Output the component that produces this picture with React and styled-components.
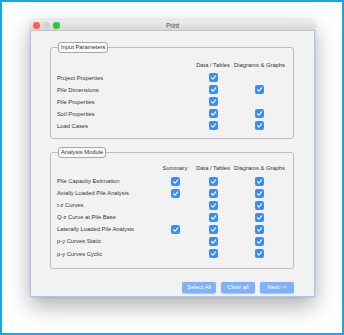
import React from "react";
import styled, { createGlobalStyle } from "styled-components";

const GlobalStyle = createGlobalStyle`
  html, body {
    margin: 0;
    background: #ffffff;
  }
  * {
    box-sizing: border-box;
  }
`;

const inputRows = [
  { label: "Project Properties", checks: [true, false] },
  { label: "Pile Dimensions", checks: [true, true] },
  { label: "Pile Properties", checks: [true, false] },
  { label: "Soil Properties", checks: [true, true] },
  { label: "Load Cases", checks: [true, true] },
];

const analysisRows = [
  { label: "Pile Capacity Estimation", checks: [true, true, true] },
  { label: "Axially Loaded Pile Analysis", checks: [true, true, true] },
  { label: "t-z Curves", checks: [false, true, true] },
  { label: "Q-z Curve at Pile Base", checks: [false, true, true] },
  { label: "Laterally Loaded Pile Analysis", checks: [true, true, true] },
  { label: "p-y Curves Static", checks: [false, true, true] },
  { label: "p-y Curves Cyclic", checks: [false, true, true] },
];

function Check({ on }) {
  if (!on) return <Empty />;
  return (
    <Box>
      <svg width="7" height="7" viewBox="0 0 10 10">
        <path
          d="M2 5.3 L4.2 7.4 L8.2 2.6"
          fill="none"
          stroke="#fff"
          strokeWidth="1.5"
          strokeLinecap="round"
          strokeLinejoin="round"
        />
      </svg>
    </Box>
  );
}

function Group({ title, headers, rows, cols, top, bottom }) {
  return (
    <Fieldset $top={top} $bottom={bottom}>
      <Legend>{title}</Legend>
      <Grid $cols={cols}>
        <span />
        {headers.map((h, i) => (
          <Header key={i}>{h}</Header>
        ))}
        {rows.map((r) => (
          <React.Fragment key={r.label}>
            <Label>{r.label}</Label>
            {r.checks.map((c, i) => (
              <Cell key={i}>
                <Check on={c} />
              </Cell>
            ))}
          </React.Fragment>
        ))}
      </Grid>
    </Fieldset>
  );
}

export default function App() {
  return (
    <>
      <GlobalStyle />
      <Frame>
        <Window>
          <TitleBar>
            <Lights>
              <Light $c="#fc5f57" />
              <Light $c="#d3d3d3" />
              <Light $c="#2cc440" />
            </Lights>
            <Title>Print</Title>
          </TitleBar>
          <Content>
            <Group
              title="Input Parameters"
              headers={["Data / Tables", "Diagrams & Graphs"]}
              rows={inputRows}
              cols="1fr 36px 54px"
              top={5.5}
              bottom={6.5}
            />
            <Group
              title="Analysis Module"
              headers={["Summary", "Data / Tables", "Diagrams & Graphs"]}
              rows={analysisRows}
              cols="1fr 37px 36px 54px"
              top={3.5}
              bottom={8.5}
            />
            <Buttons>
              <Button>Select All</Button>
              <Button>Clear all</Button>
              <Button>Next -&gt;</Button>
            </Buttons>
          </Content>
        </Window>
      </Frame>
    </>
  );
}

const Frame = styled.div`
  width: 344px;
  height: 335px;
  border: 2px solid #17a7e1;
  padding: 18px 0 0 28px;
  font-family: "Liberation Sans", Arial, sans-serif;
`;

const Window = styled.div`
  width: 285px;
  height: 277px;
  display: flex;
  flex-direction: column;
  box-shadow: 0 9px 22px rgba(0, 0, 0, 0.32), 0 0 3px rgba(0, 0, 0, 0.12);
  border-radius: 3px 3px 0 0;
`;

const TitleBar = styled.div`
  position: relative;
  height: 11px;
  flex: none;
  display: flex;
  align-items: center;
  justify-content: center;
  background: linear-gradient(#ececec, #d8d8d8);
  border-bottom: 1px solid #c4c4c4;
  border-radius: 3px 3px 0 0;
`;

const Lights = styled.div`
  position: absolute;
  left: 3px;
  top: 2px;
  display: flex;
  gap: 3.5px;
`;

const Light = styled.span`
  width: 6.5px;
  height: 6.5px;
  border-radius: 50%;
  background: ${(p) => p.$c};
`;

const Title = styled.div`
  font-size: 6.4px;
  color: #4d4d4d;
`;

const Content = styled.div`
  flex: 1;
  min-height: 0;
  background: #f2f2f2;
  border: 1px solid #a9c6ee;
  border-top: none;
  padding: 11px 20px 0 19px;
  display: flex;
  flex-direction: column;
  gap: 8px;
`;

const Fieldset = styled.fieldset`
  margin: 0;
  padding: ${(p) => p.$top}px 6.5px ${(p) => p.$bottom}px 6px;
  border: 1px solid #bdbdbd;
  border-radius: 3px;
  min-width: 0;
`;

const Legend = styled.legend`
  margin-left: 1px;
  padding: 0.5px 2px 1px;
  font-size: 5.8px;
  line-height: 7px;
  color: #333;
  background: #fafafa;
  border: 1px solid #a8a8a8;
  border-radius: 3px;
`;

const Grid = styled.div`
  display: grid;
  grid-template-columns: ${(p) => p.$cols};
  grid-template-rows: 13.5px;
  grid-auto-rows: 12.1px;
  column-gap: 1.5px;
  align-items: center;
`;

const Header = styled.span`
  font-size: 5.8px;
  color: #333;
  text-align: center;
  white-space: nowrap;
`;

const Label = styled.span`
  font-size: 5.8px;
  color: #333;
  white-space: nowrap;
`;

const Cell = styled.div`
  display: flex;
  justify-content: center;
`;

const Box = styled.span`
  width: 9px;
  height: 9px;
  border-radius: 2px;
  background: #3d8ef3;
  display: flex;
  align-items: center;
  justify-content: center;
`;

const Empty = styled.span`
  width: 9px;
  height: 9px;
`;

const Buttons = styled.div`
  margin-top: 4.5px;
  display: flex;
  justify-content: flex-end;
  gap: 5px;
`;

const Button = styled.button`
  width: 34px;
  height: 11px;
  padding: 0;
  border: none;
  border-radius: 2px;
  background: #80b2f8;
  color: #fff;
  font-family: inherit;
  font-size: 5.8px;
  box-shadow: 0 0.5px 1px rgba(0, 0, 0, 0.2);
`;
